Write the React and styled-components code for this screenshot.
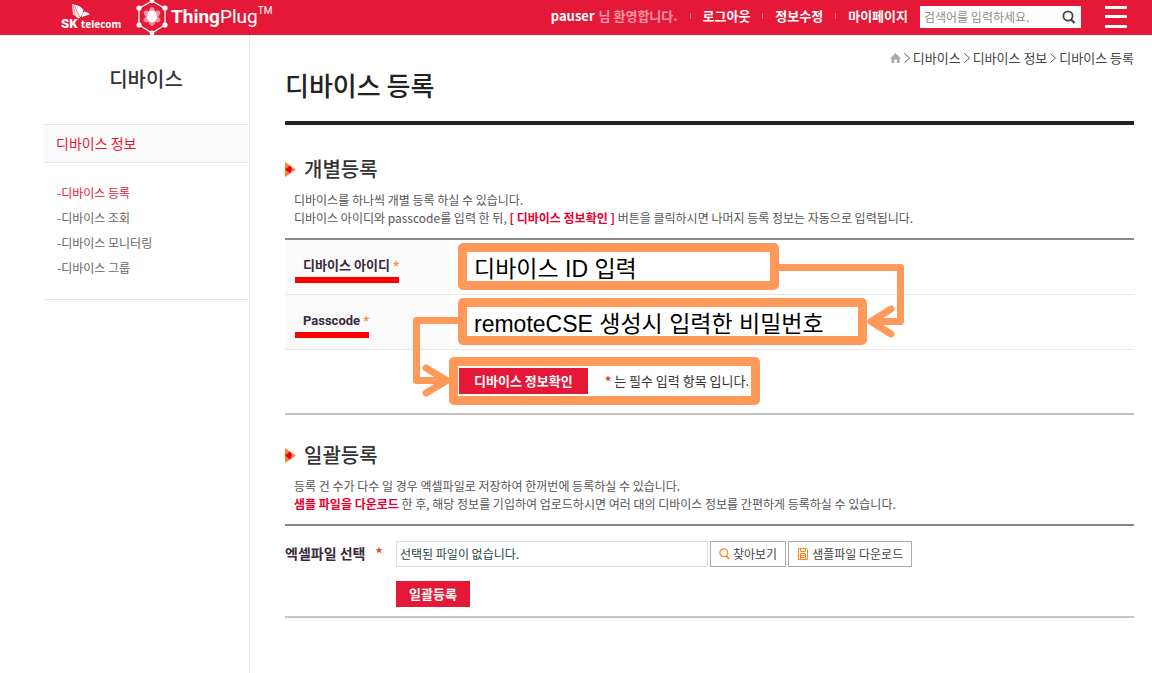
import React from 'react';
import styled, { createGlobalStyle } from 'styled-components';

const RED = '#e51937';
const ORANGE = '#ff9959';
const KR = '"Noto Sans CJK KR", sans-serif';

const Global = createGlobalStyle`
  * { box-sizing: border-box; }
  body { margin: 0; background: #fff; color: #555; font: 12px/18px ${KR}; }
  h1, h2, p, ul, ol { margin: 0; padding: 0; }
  ul, ol { list-style: none; }
  a { color: inherit; text-decoration: none; }
  button, input { font-family: inherit; }
`;

const Page = styled.div`
  display: flex;
  flex-direction: column;
  min-height: 100vh;
`;

const TopBar = styled.header`
  display: flex;
  align-items: center;
  height: 35px;
  padding: 0 25px 0 61px;
  background: ${RED};
  color: #fff;
`;

const SkLogo = styled.a`
  display: block;
  width: 60px;
  height: 35px;
  margin-right: 14px;
`;

const PlugLogo = styled.a`
  display: flex;
  gap: 3px;
  height: 35px;
  font: 19px/33px Roboto, sans-serif;
  svg { overflow: visible; }
  sup { font-size: 10px; line-height: 22px; vertical-align: top; }
`;

const UserNav = styled.ul`
  display: flex;
  align-items: center;
  margin: 0 12px 0 auto;
  font-size: 13px;
  line-height: 30px;
  height: 35px;
  font-weight: 700;
  white-space: nowrap;
`;

const UserItem = styled.li`
  display: flex;
  align-items: center;
  height: 32px;
  align-self: flex-start;
  & + &::before {
    content: '';
    width: 1px;
    height: 6px;
    margin: 0 12px;
    background: #f2828f;
  }
`;

const Welcome = styled.span`
  color: #f895a2;
  margin-left: 4px;
`;

const Search = styled.form`
  display: flex;
  align-items: center;
  width: 161px;
  height: 22px;
  margin: 0 24px 2px 0;
  background: #fff;
  input {
    flex: 1;
    min-width: 0;
    height: 22px;
    padding: 0 4px;
    border: 0;
    background: none;
    font-size: 12px;
    &::placeholder { color: #8c8c8c; opacity: 1; }
  }
  button {
    display: flex;
    padding: 0 5px;
    border: 0;
    background: none;
  }
`;

const MenuButton = styled.button`
  display: flex;
  flex-direction: column;
  justify-content: space-between;
  width: 22px;
  height: 22px;
  margin-bottom: 2px;
  padding: 0;
  border: 0;
  background: none;
  span { height: 3px; background: #fff; border-radius: 1px; }
`;

const Body = styled.div`
  display: flex;
  flex: 1;
`;

const Sidebar = styled.aside`
  flex: 0 0 250px;
  padding: 30px 1px 0 44px;
  border-right: 1px solid #e8e8e8;
`;

const SideTitle = styled.h2`
  height: 59px;
  color: #333;
  font-size: 20px;
  font-weight: 500;
  line-height: 28px;
  text-align: center;
`;

const SideGroup = styled.a`
  display: block;
  padding: 0 12px;
  border: solid #e5e5e5;
  border-width: 1px 0;
  background: #fafafa;
  color: ${RED};
  font-size: 14px;
  line-height: 37px;
`;

const SideList = styled.ul`
  padding: 17px 13px 19px;
  border-bottom: 1px solid #e5e5e5;
  line-height: 25px;
`;

const SideLink = styled.a`
  color: ${p => (p.$current ? RED : '#666')};
`;

const Main = styled.main`
  flex: 1;
  min-width: 0;
  padding: 14px 18px 24px 35px;
`;

const Crumbs = styled.ol`
  display: flex;
  justify-content: flex-end;
  align-items: center;
  gap: 3px;
  height: 18px;
  color: #444;
  font-size: 13px;
  line-height: 18px;
  svg { display: block; }
`;

const Crumb = styled.li`
  display: flex;
  align-items: center;
  gap: 3px;
`;

const PageTitle = styled.h1`
  padding-bottom: 18px;
  border-bottom: 4px solid #222;
  color: #222;
  font-size: 26px;
  font-weight: 500;
  line-height: 36px;
`;

const Section = styled.section`
  padding-top: ${p => p.$top}px;
`;

const SectionTitle = styled.h2`
  display: flex;
  align-items: center;
  gap: 8px;
  color: #333;
  font-size: 20px;
  font-weight: 500;
  line-height: 28px;
`;

const Description = styled.p`
  padding: 8px 9px 11px;
  strong { color: #e4002f; }
`;

const Form = styled.form`
  position: relative;
  border: solid #888;
  border-width: 2px 0;
  border-bottom-color: #c4c4c4;
`;

const Field = styled.div`
  display: grid;
  grid-template-columns: 165px 1fr;
  height: 55px;
  border-bottom: 1px solid #e8e8e8;
`;

const LabelCell = styled.div`
  padding: 16px 10px 0;
  background: #fafafa;
`;

const FieldLabel = styled.label`
  display: inline-block;
  padding: 0 0 2px 8px;
  border-bottom: 6px solid #f00;
  color: #3a2a3c;
  font: 700 13px/18px Roboto, ${KR};
`;

const Required = styled.span`
  color: ${p => (p.$strong ? '#e8401c' : '#ff8a3c')};
  font-weight: 700;
`;

const BigInput = styled.input`
  width: ${p => p.$width}px;
  max-width: 100%;
  height: 47px;
  margin: 3px 8px;
  padding: 0 7px;
  border: 9px solid ${ORANGE};
  border-radius: 5px;
  background: #fff;
  color: #000;
  font: 23px/29px "Liberation Sans", ${KR};
`;

const Actions = styled.div`
  padding: 7px 0 8px 164px;
`;

const ConfirmBox = styled.div`
  display: flex;
  align-items: center;
  gap: 17px;
  width: 311px;
  height: 48px;
  padding-left: 1px;
  border: 9px solid ${ORANGE};
  border-radius: 5px;
  color: #333;
  font-size: 13px;
  white-space: nowrap;
`;

const PrimaryButton = styled.button`
  height: 26px;
  padding: 0 ${p => p.$pad}px;
  border: 0;
  background: ${RED};
  color: #fff;
  font-size: 13px;
  font-weight: 700;
  line-height: 24px;
`;

const Arrows = styled.svg`
  position: absolute;
  left: 0;
  top: 0;
  pointer-events: none;
`;

const Upload = styled.div`
  display: grid;
  grid-template-columns: 111px 1fr;
  row-gap: 14px;
  padding: 15px 0 9px;
`;

const UploadLabel = styled.label`
  display: flex;
  gap: 10px;
  color: #3a2a3c;
  font-size: 14px;
  font-weight: 700;
  line-height: 24px;
`;

const UploadRow = styled.div`
  display: flex;
  gap: 2px;
  grid-column: 2;
`;

const FileName = styled.input`
  width: 312px;
  height: 26px;
  padding: 0 3px 2px;
  border: 1px solid #ddd;
  color: #1c4545;
  font-size: 12px;
`;

const PlainButton = styled.button`
  display: flex;
  align-items: center;
  gap: 3px;
  height: 26px;
  padding: 0 8px;
  border: 1px solid #aaa;
  background: #fff;
  color: #444;
  font-size: 12px;
  line-height: 24px;
  white-space: nowrap;
`;

const Marker = () => (
  <svg width="11" height="15" viewBox="0 0 11 15" aria-hidden="true">
    <path d="M0 0 11 7.500 0 15Z" fill="#ff8526" />
    <path d="M0 7.500 5 3.500 7 7.500 5 11.500Z" fill="#e3001f" />
  </svg>
);

const crumbs = ['디바이스', '디바이스 정보', '디바이스 등록'];
const sideItems = ['디바이스 등록', '디바이스 조회', '디바이스 모니터링', '디바이스 그룹'];

export default function App() {
  return (
    <Page>
      <Global />
      <TopBar>
        <SkLogo href="#" aria-label="SK telecom">
          <svg width="60" height="35" viewBox="0 0 60 35" fill="#fff">
            <path d="M11 4C16 5 21 7 22.500 10C22 14 20 17 17.500 18.500L12 14.500Z" />
            <path d="M20.500 17.500C21 15 22 12.500 23.500 11.500C26 12 28 13 28.800 14.500C26 15 23 16 20.500 17.500Z" />
            <path d="M12 5 14.500 17M13.500 5.500 18.500 17" stroke={RED} strokeWidth="0.6" />
            <text x="0" y="28" fontFamily="Roboto, sans-serif" fontWeight="900" fontSize="13">SK</text>
            <text x="20" y="28" fontFamily='"Open Sans", sans-serif' fontWeight="700" fontSize="10">telecom</text>
          </svg>
        </SkLogo>
        <PlugLogo href="#">
          <svg width="33" height="35" viewBox="0 0 33 35" fill="#fff">
            <path d="M17 1 30 8.500V25L17 33 4 25V8.500Z" fill="none" stroke="#fff" strokeWidth="1.300" />
            <g fill="#f2919f">
              <ellipse cx="17" cy="16.500" rx="4" ry="9.500" />
              <ellipse cx="17" cy="16.500" rx="4" ry="9.500" transform="rotate(60 17 16.500)" />
              <ellipse cx="17" cy="16.500" rx="4" ry="9.500" transform="rotate(120 17 16.500)" />
            </g>
            <ellipse cx="17" cy="16.500" rx="5" ry="6" />
            <circle cx="17" cy="1" r="2.200" /><circle cx="30" cy="8" r="2.600" /><circle cx="30" cy="25" r="2.600" />
            <circle cx="17" cy="33" r="2.400" /><circle cx="4" cy="25" r="2.600" /><circle cx="4" cy="8" r="2.600" />
          </svg>
          <span><b>Thing</b>Plug<sup>TM</sup></span>
        </PlugLogo>
        <UserNav>
          <UserItem>pauser<Welcome>님 환영합니다.</Welcome></UserItem>
          <UserItem><a href="#">로그아웃</a></UserItem>
          <UserItem><a href="#">정보수정</a></UserItem>
          <UserItem><a href="#">마이페이지</a></UserItem>
        </UserNav>
        <Search>
          <input type="text" aria-label="검색어" placeholder="검색어를 입력하세요." />
          <button type="button" aria-label="검색">
            <svg width="14" height="14" viewBox="0 0 14 14" fill="none" stroke="#444" strokeWidth="1.800">
              <circle cx="6" cy="6" r="4.600" /><path d="M9 9.500 12.500 13" strokeWidth="2.200" />
            </svg>
          </button>
        </Search>
        <MenuButton type="button" aria-label="메뉴"><span /><span /><span /></MenuButton>
      </TopBar>
      <Body>
        <Sidebar>
          <SideTitle>디바이스</SideTitle>
          <SideGroup href="#">디바이스 정보</SideGroup>
          <SideList>
            {sideItems.map((item, i) => (
              <li key={item}><SideLink href="#" $current={i === 0}>-{item}</SideLink></li>
            ))}
          </SideList>
        </Sidebar>
        <Main>
          <Crumbs>
            <li>
              <a href="#" aria-label="홈">
                <svg width="11" height="10" viewBox="0 0 11 10" fill="#aaa">
                  <path d="M5.500 0 11 5.500H9.500V10H6.800V6.500H4.200V10H1.500V5.500H0Z" />
                </svg>
              </a>
            </li>
            {crumbs.map(name => (
              <Crumb key={name}>
                <svg width="6" height="10" viewBox="0 0 6 10" fill="none" stroke="#555"><path d="M.5.500 5.500 5 .5 9.500" /></svg>
                <a href="#">{name}</a>
              </Crumb>
            ))}
          </Crumbs>
          <PageTitle>디바이스 등록</PageTitle>

          <Section $top={30}>
            <SectionTitle><Marker />개별등록</SectionTitle>
            <Description>
              디바이스를 하나씩 개별 등록 하실 수 있습니다.<br />
              디바이스 아이디와 passcode를 입력 한 뒤, <strong>[ 디바이스 정보확인 ]</strong> 버튼을 클릭하시면 나머지 등록 정보는 자동으로 입력됩니다.
            </Description>
            <Form>
              <Field>
                <LabelCell><FieldLabel htmlFor="device">디바이스 아이디 <Required>*</Required></FieldLabel></LabelCell>
                <div><BigInput id="device" $width={321} defaultValue="디바이스 ID 입력" /></div>
              </Field>
              <Field>
                <LabelCell><FieldLabel htmlFor="passcode">Passcode <Required>*</Required></FieldLabel></LabelCell>
                <div><BigInput id="passcode" $width={409} defaultValue="remoteCSE 생성시 입력한 비밀번호" /></div>
              </Field>
              <Actions>
                <ConfirmBox>
                  <PrimaryButton type="button" $pad={15}>디바이스 정보확인</PrimaryButton>
                  <span><Required $strong>*</Required> 는 필수 입력 항목 입니다.</span>
                </ConfirmBox>
              </Actions>
              <Arrows width="640" height="172" viewBox="0 0 640 172" fill="none" stroke={ORANGE} strokeWidth="7" strokeLinejoin="round" strokeLinecap="round" aria-hidden="true">
                <path d="M494 27.500H615.500V81.500H588" />
                <path d="M606 69 586 81.500 606 94" />
                <path d="M176 80.500H131.500V140.500H160" />
                <path d="M141 128 162 140.500 141 153" />
              </Arrows>
            </Form>
          </Section>

          <Section $top={26}>
            <SectionTitle><Marker />일괄등록</SectionTitle>
            <Description>
              등록 건 수가 다수 일 경우 엑셀파일로 저장하여 한꺼번에 등록하실 수 있습니다.<br />
              <strong>샘플 파일을 다운로드</strong> 한 후, 해당 정보를 기입하여 업로드하시면 여러 대의 디바이스 정보를 간편하게 등록하실 수 있습니다.
            </Description>
            <Form>
              <Upload>
                <UploadLabel htmlFor="excel">엑셀파일 선택 <Required $strong>*</Required></UploadLabel>
                <UploadRow>
                  <FileName id="excel" readOnly value="선택된 파일이 없습니다." />
                  <PlainButton type="button">
                    <svg width="11" height="12" viewBox="0 0 11 12" fill="none" stroke="#ff8526" strokeWidth="1.300">
                      <circle cx="4.800" cy="4.800" r="3.900" /><path d="M7.300 8 10 11" strokeWidth="1.800" />
                    </svg>
                    찾아보기
                  </PlainButton>
                  <PlainButton type="button">
                    <svg width="12" height="12" viewBox="0 0 12 12" fill="none" stroke="#ff8526">
                      <path d="M1.500.500H9.500L10.500 1.500V11.500H1.500ZM3.500.500V3.500H8.500V.500M3.500 11.500V5.500H8.500V11.500M4 7.500H8M4 9.500H8" />
                    </svg>
                    샘플파일 다운로드
                  </PlainButton>
                </UploadRow>
                <UploadRow><PrimaryButton type="button" $pad={13}>일괄등록</PrimaryButton></UploadRow>
              </Upload>
            </Form>
          </Section>
        </Main>
      </Body>
    </Page>
  );
}
